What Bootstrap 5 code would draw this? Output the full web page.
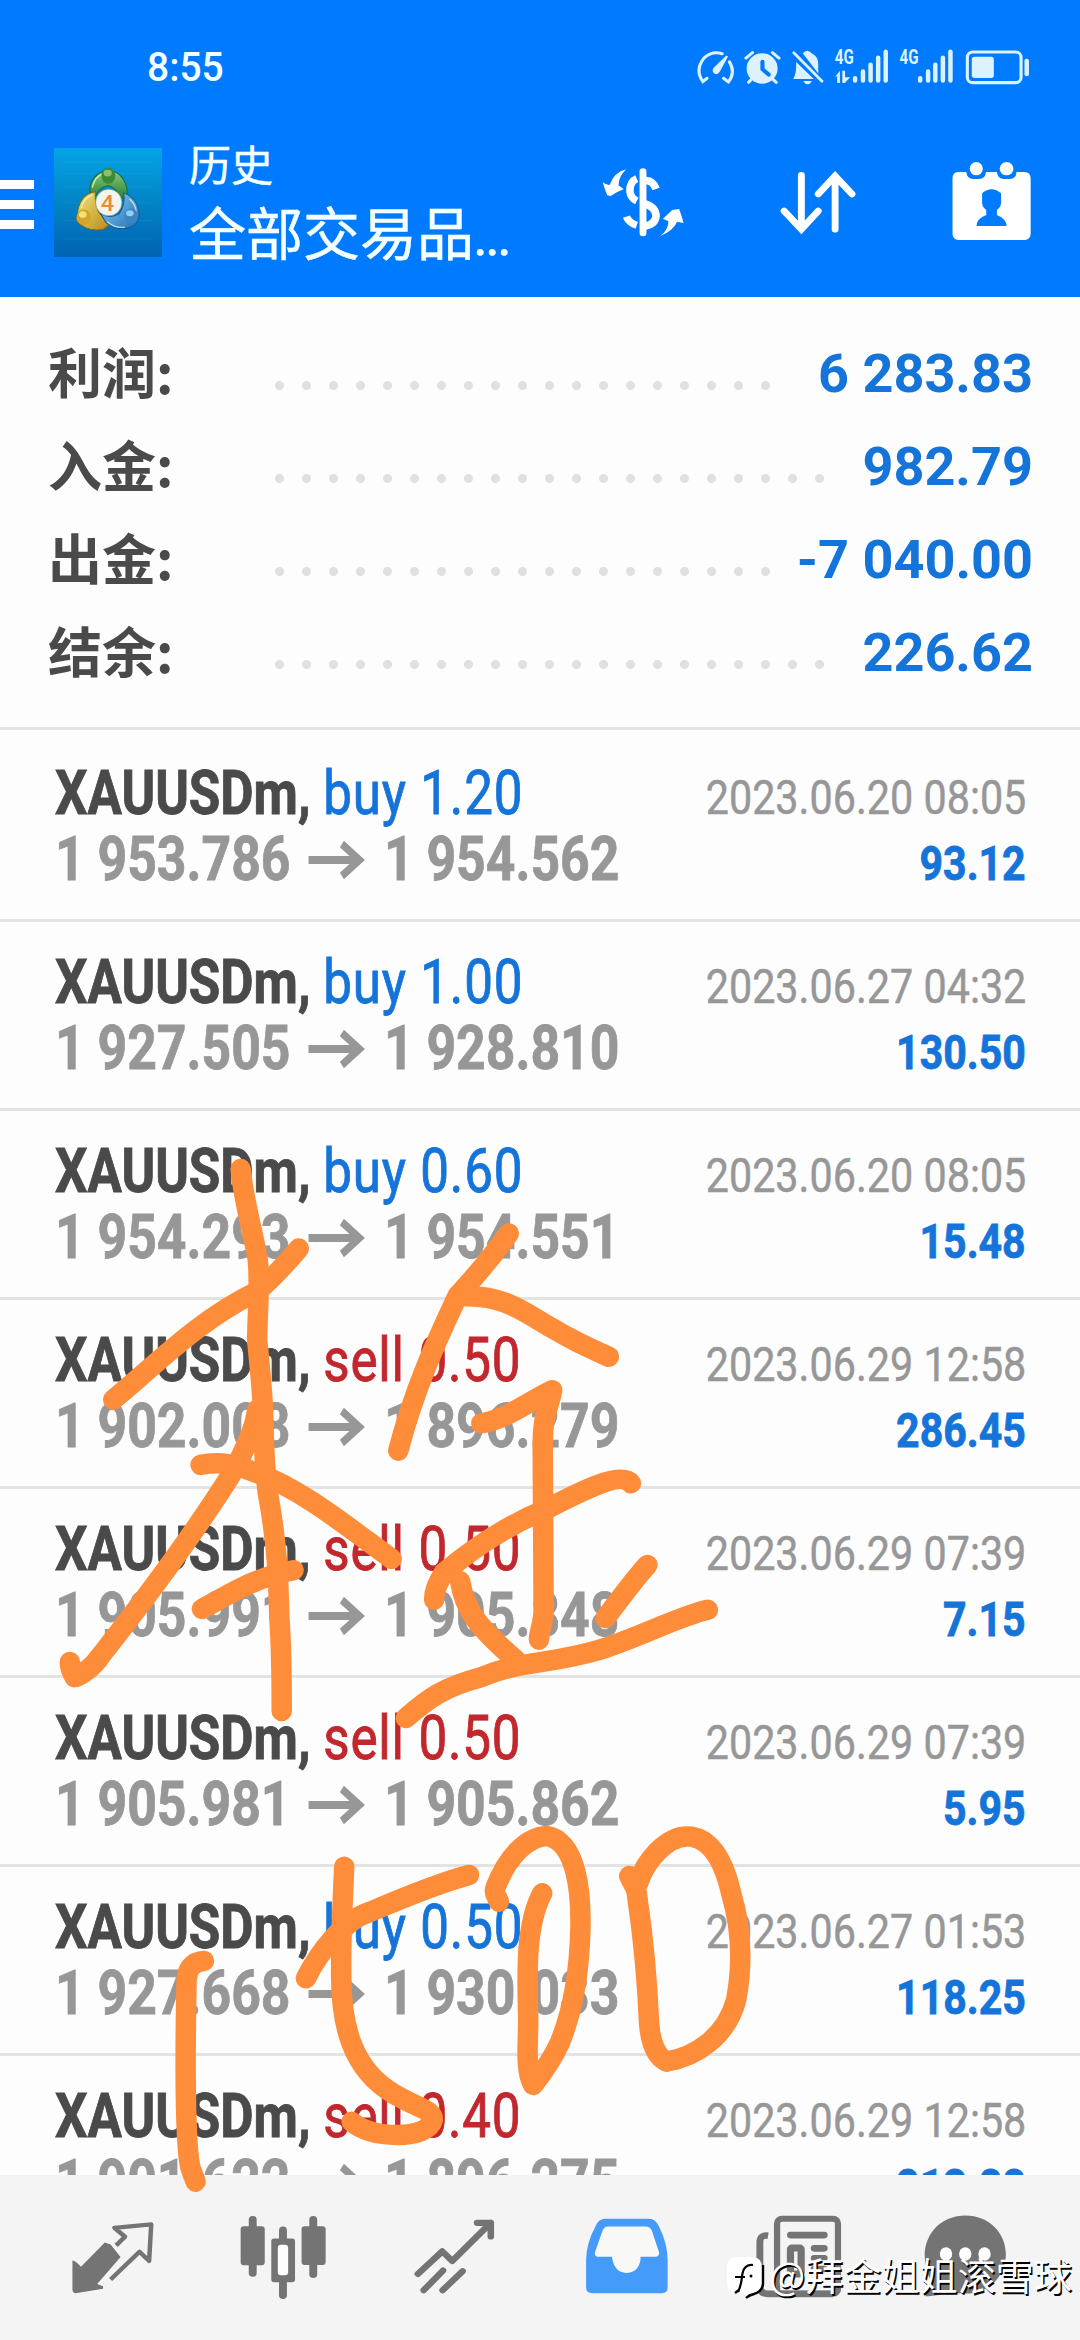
<!DOCTYPE html>
<html lang="zh-CN">
<head>
  <meta charset="UTF-8" />
  <meta name="viewport" content="width=device-width, initial-scale=1.0"/>
  <title>历史</title>
  <link href="https://cdn.jsdelivr.net/npm/bootstrap@5.3.2/dist/css/bootstrap.min.css" rel="stylesheet">
  <style>
    body { font-family: Roboto, "Noto Sans CJK SC", sans-serif; background: #fdfdfe; height: 2340px; overflow: hidden; }
    svg { display: block; flex: none; overflow: visible; }

    /* header */
    .app-header { background: #007aff; height: 297px; color: #f4ffff; }
    .status-bar { height: 136px; padding: 0 50px 0 147px; }
    .clock { font-size: 41px; font-weight: 500; transform: scaleX(.95); transform-origin: left; }
    .title-bar { height: 136px; padding-right: 49px; }
    .menu-btn i { display: block; width: 34px; height: 9px; background: #fff; margin-bottom: 11px; }
    .menu-btn { padding-top: 44px; }
    .app-logo { margin: 12px 0 0 20px; }
    .titles { margin: 1px 0 0 27px; width: 330px; -webkit-text-stroke: .5px; }
    .title-small { font-size: 42px; line-height: 60px; }
    .title-large { font-size: 57px; line-height: 77px; }
    .title-dots { letter-spacing: -3px; margin-left: -1px; }

    /* summary */
    .summary { height: 433px; padding: 30px 48px 0; border-bottom: 3px solid #e3e3e4; }
    .sum-row { height: 93px; line-height: 93px; font-size: 54px; font-weight: 700; color: #4a4a4b; }
    .sum-label { width: 218px; font-family: "Noto Sans CJK SC", sans-serif; padding-bottom: 6px; }
    .sum-dots { height: 9px; margin-top: 24px; background: radial-gradient(circle, #e0e0e1 4px, transparent 5px) repeat-x 0 0 / 27px 9px; }
    .sum-value { margin-right: -1px; }
    .profit { color: #1474d9; }

    /* deals */
    .deals { height: 1445px; }
    .deal { height: 189px; padding: 27px 54px 0 55px; border-bottom: 3px solid #e3e3e4; color: #979798; }
    .deal:first-child { height: 192px; padding-top: 30px; }
    .deal-line { height: 66px; line-height: 66px; font-size: 62px; }
    .cond { display: inline-block; transform: scaleX(.825); transform-origin: left; white-space: pre; }
    .cond-end { transform-origin: right; font-size: 49px; }
    .cond-date { transform: scaleX(.843); -webkit-text-stroke: .5px; }
    .cond-price { transform: scaleX(.834); -webkit-text-stroke: .8px; }
    .cond-profit { transform: scaleX(.838); -webkit-text-stroke: .8px; }
    .deal-symbol { color: #4a4a4b; -webkit-text-stroke: .9px; }
    .buy, .sell { letter-spacing: 1px; -webkit-text-stroke: .9px; }
    .buy { color: #1474d9; }
    .sell { color: #c1272d; }
    .deal-arrow { display: inline-block; width: 66px; height: 38px; margin: 0 24px 0 22px; vertical-align: 1px; }

    /* bottom navigation */
    .tab-bar { height: 165px; background: #f4f4f4; padding: 0 27px; color: #747474; }
    .tab-bar svg { width: 171px; height: 165px; }

    .drawing { position: absolute; left: 0; top: 0; pointer-events: none; }
    .drawing path { fill: none; stroke: #ff8c39; stroke-width: 20.5px; stroke-linecap: round; stroke-linejoin: round; vector-effect: non-scaling-stroke; }
    .author-tag { position: absolute; right: 8px; bottom: 38px; color: #fff; font: 400 38px/56px "Noto Sans CJK SC", sans-serif; letter-spacing: .1px; text-shadow: 1.5px 1.5px 0 #000; gap: 4px; }
    .author-logo { margin-top: 7px; }
  </style>
</head>
<body class="position-relative">
  <header class="app-header">
    <div class="status-bar d-flex align-items-center justify-content-between">
      <span class="clock">8:55</span>
      <svg width="334" height="36" viewBox="450 148 970 107" preserveAspectRatio="none" fill="#dcf3ff" stroke="none">
        <g fill="none" stroke="#dcf3ff" stroke-width="9" stroke-linecap="round">
          <path d="M526 159Q496 150 473 172Q446 208 470 242L482 232M547 183Q566 215 544 243L530 232"/>
        </g>
        <path d="M543 167L519 213Q512 224 502 217Q494 208 503 199L538 164Z"/>
        <circle cx="642" cy="203" r="45"/>
        <path d="M595 172L614 156M691 172L672 156M612 234L603 244M672 234L683 244" stroke="#dcf3ff" stroke-width="9" stroke-linecap="round"/>
        <path d="M643 183V205L661 221" fill="none" stroke="#007aff" stroke-width="12" stroke-linecap="round"/>
        <path d="M760 158Q773 143 786 158Q806 168 805 192V218ZM741 184L792 234H732Q742 222 741 184ZM761 240H787Q774 260 761 240Z"/>
        <path d="M734 156L816 241" stroke="#dcf3ff" stroke-width="8" stroke-linecap="round"/>
        <text x="853" y="191" font-size="60" font-weight="700" textLength="55" lengthAdjust="spacingAndGlyphs">4G</text>
        <text x="1041" y="191" font-size="60" font-weight="700" textLength="55" lengthAdjust="spacingAndGlyphs">4G</text>
        <path d="M854 228L868 210V246H860V226ZM875 210H883V229H898L882 246H875Z"/>
        <g stroke="#dcf3ff" stroke-width="13" stroke-linecap="round">
          <path d="M912 232V239M935 212V239M957 192V239M979 171V239M1001 153V239M1101 232V239M1124 212V239M1145 192V239M1167 171V239M1189 153V239"/>
        </g>
        <rect x="1238" y="154" width="156" height="91" rx="16" fill="none" stroke="#dcf3ff" stroke-width="9"/>
        <rect x="1251" y="168" width="64" height="63" rx="8"/>
        <rect x="1404" y="174" width="13" height="52" rx="6"/>
      </svg>
    </div>
    <div class="title-bar d-flex">
      <div class="menu-btn"><i></i><i></i><i></i></div>
      <svg class="app-logo" width="108" height="109" viewBox="157 443 312 326" preserveAspectRatio="none">
        <defs>
          <linearGradient id="sky" x1="0" y1="0" x2="0" y2="1"><stop offset="0" stop-color="#05a4e6"/><stop offset=".5" stop-color="#0284c6"/><stop offset="1" stop-color="#0062b3"/></linearGradient>
          <linearGradient id="grn" x1="0" y1="0" x2="0" y2="1"><stop offset="0" stop-color="#8fc97c"/><stop offset="1" stop-color="#1f7d34"/></linearGradient>
          <linearGradient id="yel" x1="0" y1="0" x2="1" y2="1"><stop offset="0" stop-color="#f3e678"/><stop offset="1" stop-color="#b98b1a"/></linearGradient>
          <linearGradient id="blu" x1="0" y1="0" x2="1" y2="1"><stop offset="0" stop-color="#8fd0f0"/><stop offset="1" stop-color="#1c6fb8"/></linearGradient>
        </defs>
        <rect x="157" y="443" width="312" height="326" fill="url(#sky)"/>
        <path d="M187 486H440M187 520H440M187 560H440M187 607H440M187 660H440M187 715H440" stroke="#2fb4e6" stroke-width="2" opacity=".3"/>
        <path d="M262 585Q254 545 285 520Q315 500 345 522Q376 552 366 598L348 590Q335 560 314 556Q288 560 275 590Z" fill="url(#grn)" stroke="#1c6b3a" stroke-width="3"/>
        <path d="M276 574Q235 580 226 630L222 660Q250 696 300 686L316 674L295 645Q275 630 276 574Z" fill="url(#yel)" stroke="#7a6a20" stroke-width="3"/>
        <path d="M358 578Q400 592 403 640Q405 668 378 680Q336 694 306 664L292 640Q320 655 345 640Q365 610 358 578Z" fill="url(#blu)" stroke="#155a96" stroke-width="3"/>
        <path d="M268 560Q276 526 300 520M236 622Q242 592 268 584M376 596Q394 612 394 634M312 664Q332 682 360 680" fill="none" stroke="#f0f9dc" stroke-width="4" stroke-linecap="round" opacity=".7"/>
        <ellipse cx="314" cy="526" rx="20" ry="24" fill="#3c8a38"/><ellipse cx="312" cy="518" rx="12" ry="10" fill="#8abf70"/>
        <ellipse cx="243" cy="650" rx="21" ry="23" fill="#d0a62b"/><ellipse cx="240" cy="642" rx="11" ry="10" fill="#f3e07c"/>
        <ellipse cx="380" cy="646" rx="20" ry="22" fill="#3c85c4"/><ellipse cx="376" cy="638" rx="11" ry="9" fill="#93ccef"/>
        <ellipse cx="315" cy="606" rx="38" ry="40" fill="#f4f4ee" stroke="#8a8f6a" stroke-width="2"/>
        <text x="292" y="630" font-size="68" font-weight="500" fill="#ea8a3a">4</text>
      </svg>
      <div class="titles">
        <div class="title-small">历史</div>
        <div class="title-large text-nowrap">全部交易品<span class="title-dots">...</span></div>
      </div>
      <svg class="ms-auto" width="430" height="136" viewBox="175 408 1249 408" preserveAspectRatio="none" fill="#fff">
        <path d="M248 508Q226 530 226 556L241 568L222 576L203 588L193 586L186 566L180 547Q192 556 200 555Q214 516 248 508Z"/>
        <path d="M347 708Q371 690 371 664L355 656L382 630L402 627L409 648L415 669L396 665Q385 692 347 708Z"/>
        <g fill="none" stroke="#fff" stroke-linecap="round" stroke-width="20">
          <path d="M297 515V699"/>
          <path d="M300 542Q325 538 335 567M279 536Q258 545 259 574Q261 594 279 603M300 611Q334 620 335 648Q333 674 300 679M279 676Q255 668 249 650" stroke-linecap="butt" stroke-width="22"/>
          <path d="M757 526V686M707 633L757 688L806 633M855 688V528M806 582L855 528L904 582"/>
        </g>
        <path fill-rule="evenodd" d="M1212 516H1236Q1238 537 1256 537H1272Q1292 537 1293 516H1325Q1327 537 1345 537H1362Q1381 537 1382 516H1405Q1423 517 1423 535V700Q1423 720 1405 720H1214Q1196 720 1196 700V535Q1196 517 1212 516ZM1282 580Q1309 555 1337 580V610Q1336 622 1325 630V645Q1352 656 1353 678H1266Q1266 656 1294 645V630Q1283 622 1282 610Z"/>
        <ellipse cx="1265" cy="506" rx="19" ry="20"/><ellipse cx="1353" cy="506" rx="20" ry="20"/>
      </svg>
    </div>
  </header>

  <section class="summary" id="summary"></section>
  <main class="deals overflow-hidden" id="deals"></main>

  <nav class="tab-bar d-flex">
    <svg viewBox="77 103 497 497" preserveAspectRatio="none" fill="currentColor">
      <path d="M209 361Q214 358 234 379L303 306L320 312L349 350L281 431L298 438V446L218 459Q209 457 209 448Z"/>
      <path d="M336 315L362 289L331 262L438 252L432 362L404 334L320 418" fill="none" stroke="currentColor" stroke-width="13" stroke-linejoin="round"/>
    </svg>
    <svg viewBox="574 103 497 497" preserveAspectRatio="none" fill="currentColor">
      <rect x="698" y="257" width="70" height="118" rx="9"/><rect x="875" y="257" width="70" height="117" rx="9"/>
      <path d="M733 238V398M909 238V402M821 270V310M821 420V465" stroke="currentColor" stroke-width="23" stroke-linecap="round"/>
      <rect x="787" y="294" width="69" height="132" rx="8"/>
      <rect x="806" y="313" width="30" height="92" rx="9" fill="#fdfdfd"/>
    </svg>
    <svg viewBox="1070 103 497 497" preserveAspectRatio="none" fill="none" stroke="currentColor" stroke-width="19" stroke-linecap="round" stroke-linejoin="round">
      <path d="M1212 401L1283 333L1312 362L1424 247M1384 247H1424V288M1285 391L1229 450M1342 393L1284 450"/>
    </svg>
    <svg viewBox="-2 223 497 497" preserveAspectRatio="none">
      <path d="M185 355H315Q334 356 344 378Q369 430 369 480V562Q369 579 352 579H150Q132 579 132 562V480Q132 430 160 376Q168 357 185 355Z" fill="#459bf9"/>
      <path d="M196 378H305Q318 378 323 390L344 456Q345 469 335 469H290V480Q283 518 249 518Q213 516 207 469H165Q155 467 158 455L180 390Q185 378 196 378Z" fill="#f8f8f6"/>
    </svg>
    <svg viewBox="495 223 497 497" preserveAspectRatio="none" fill="none" stroke="currentColor" stroke-width="18">
      <rect x="687" y="355" width="177" height="226" rx="14"/>
      <path d="M661 406Q637 402 637 426V560Q639 581 660 581H850" stroke-width="20"/>
      <path d="M726 404H824M795 444H824M795 474H824M795 506H824" stroke-width="20" stroke-linecap="round"/>
      <rect x="726" y="443" width="31" height="78" rx="4" stroke-width="21"/>
    </svg>
    <svg viewBox="992 223 497 497" preserveAspectRatio="none" fill="currentColor">
      <path d="M1234 345C1302 345 1352 396 1352 462C1352 530 1300 580 1238 580L1180 578Q1150 590 1118 588Q1134 565 1136 545Q1116 510 1116 462C1118 395 1168 345 1234 345Z"/>
      <g fill="#fff"><ellipse cx="1178" cy="461" rx="18" ry="20"/><ellipse cx="1234" cy="461" rx="18" ry="20"/><ellipse cx="1290" cy="461" rx="18" ry="20"/></g>
    </svg>
  </nav>

  <!-- handwriting over the list -->
  <svg class="drawing" width="1080" height="2340" viewBox="0 0 1080 2340">
    <g transform="translate(0 1120) scale(.4719 .4082)">
      <path d="M510 120C515 190 535 270 546 340C552 400 545 480 545 540C550 600 558 680 558 740C560 800 560 870 570 930C590 1060 590 1150 592 1220C597 1300 597 1360 597 1448"/>
      <path d="M633 315C600 360 580 385 545 420C420 490 330 600 240 685"/>
      <path d="M545 710C540 760 520 800 500 850C420 1000 310 1170 215 1310C195 1345 165 1365 158 1365C150 1350 148 1340 148 1328"/>
      <path d="M425 845C470 835 500 845 545 865C640 905 740 1000 830 1075"/>
      <path d="M428 1198C490 1160 540 1120 622 1103"/>
      <path d="M1078 278C1040 340 1010 380 970 430C930 530 880 650 844 810"/>
      <path d="M985 432C1070 430 1110 470 1170 510C1220 545 1260 565 1290 580"/>
      <path d="M1020 743C1070 735 1120 690 1170 662C1165 700 1150 720 1150 790L1152 1200C1152 1230 1143 1250 1142 1273"/>
      <path d="M1337 890C1315 860 1230 910 1155 955C1060 1000 980 1070 940 1110C925 1140 920 1155 920 1175"/>
      <path d="M975 1130C985 1200 1010 1240 1095 1325"/>
      <path d="M1372 1090C1340 1130 1310 1180 1283 1220"/>
      <path d="M1500 1200C1440 1215 1350 1270 1270 1298C1160 1335 1100 1325 1020 1365C940 1390 910 1415 860 1465"/>
    </g>
    <g transform="translate(0 1760) scale(.4974 .3333)">
      <path d="M410 603C385 605 375 630 375 670C372 900 372 1100 380 1200C382 1235 390 1245 393 1265"/>
      <path d="M692 320C690 400 685 520 686 640C685 800 710 930 790 1000C840 1045 872 1050 870 1080C865 1110 835 1125 800 1125C760 1125 730 1115 707 1085"/>
      <path d="M943 345C880 370 800 420 745 455C690 480 640 580 615 655"/>
      <path d="M1003 425C1000 410 990 400 997 380C1020 290 1060 230 1100 228C1160 245 1168 400 1167 500C1165 650 1150 760 1125 850C1110 900 1085 950 1072 975C1055 930 1062 850 1062 780C1060 650 1055 500 1090 400"/>
      <path d="M1265 348C1275 380 1280 380 1282 420C1290 500 1300 620 1305 790C1308 850 1320 890 1340 905C1400 890 1460 830 1480 720C1495 600 1490 500 1470 400C1455 300 1430 240 1390 230C1340 220 1295 310 1283 370"/>
    </g>
  </svg>

  <div class="author-tag d-flex align-items-center">
    <svg class="author-logo" width="39" height="44" viewBox="0 0 39 44">
      <path d="M10 1H27Q36 2 36 11V28Q36 35 27 37L20 42L19 37H10Q1 36 1 27V10Q1 2 10 1Z" fill="#fff"/>
      <path d="M37 9V28Q36 36 28 38Q23 39 20 42M9 37L13 34" fill="none" stroke="#000" stroke-width="2.400"/>
      <path d="M12 36Q15 30 16 21Q17 8 27 9M9 21H19" fill="none" stroke="#000" stroke-width="2.200"/>
      <circle cx="25" cy="20" r="1.500" fill="#000"/>
    </svg>
    <span>@拜金姐姐滚雪球</span>
  </div>

  <script src="https://cdn.jsdelivr.net/npm/bootstrap@5.3.2/dist/js/bootstrap.bundle.min.js"></script>
  <script>
    const summary = [
      { label: '利润:', dots: 19, value: '6 283.83' },
      { label: '入金:', dots: 21, value: '982.79' },
      { label: '出金:', dots: 19, value: '-7 040.00' },
      { label: '结余:', dots: 21, value: '226.62' }
    ];
    const deals = [
      ['buy', '1.20', '1 953.786', '1 954.562', '2023.06.20 08:05', '93.12'],
      ['buy', '1.00', '1 927.505', '1 928.810', '2023.06.27 04:32', '130.50'],
      ['buy', '0.60', '1 954.293', '1 954.551', '2023.06.20 08:05', '15.48'],
      ['sell', '0.50', '1 902.008', '1 896.279', '2023.06.29 12:58', '286.45'],
      ['sell', '0.50', '1 905.991', '1 905.848', '2023.06.29 07:39', '7.15'],
      ['sell', '0.50', '1 905.981', '1 905.862', '2023.06.29 07:39', '5.95'],
      ['buy', '0.50', '1 927.668', '1 930.033', '2023.06.27 01:53', '118.25'],
      ['sell', '0.40', '1 901.622', '1 896.275', '2023.06.29 12:58', '213.88']
    ];

    document.getElementById('summary').innerHTML = summary.map(s => `
      <div class="sum-row d-flex align-items-center">
        <span class="sum-label">${s.label}</span>
        <span class="sum-dots" style="width: ${s.dots * 27}px"></span>
        <span class="sum-value profit ms-auto">${s.value}</span>
      </div>`).join('');

    document.getElementById('deals').innerHTML = deals.map(([side, lots, open, close, time, profit]) => `
      <div class="deal">
        <div class="deal-line d-flex justify-content-between align-items-baseline">
          <span class="cond"><b class="deal-symbol">XAUUSDm,</b> <span class="${side}">${side} ${lots}</span></span>
          <span class="cond cond-end cond-date">${time}</span>
        </div>
        <div class="deal-line d-flex justify-content-between align-items-baseline fw-bold">
          <span class="cond cond-price">${open}<svg class="deal-arrow" viewBox="0 0 66 38" preserveAspectRatio="none"><path d="M0 19H60M40 3L61 19L40 35" fill="none" stroke="currentColor" stroke-width="8"/></svg>${close}</span>
          <span class="cond cond-end cond-profit profit">${profit}</span>
        </div>
      </div>`).join('');
  </script>
</body>
</html>
